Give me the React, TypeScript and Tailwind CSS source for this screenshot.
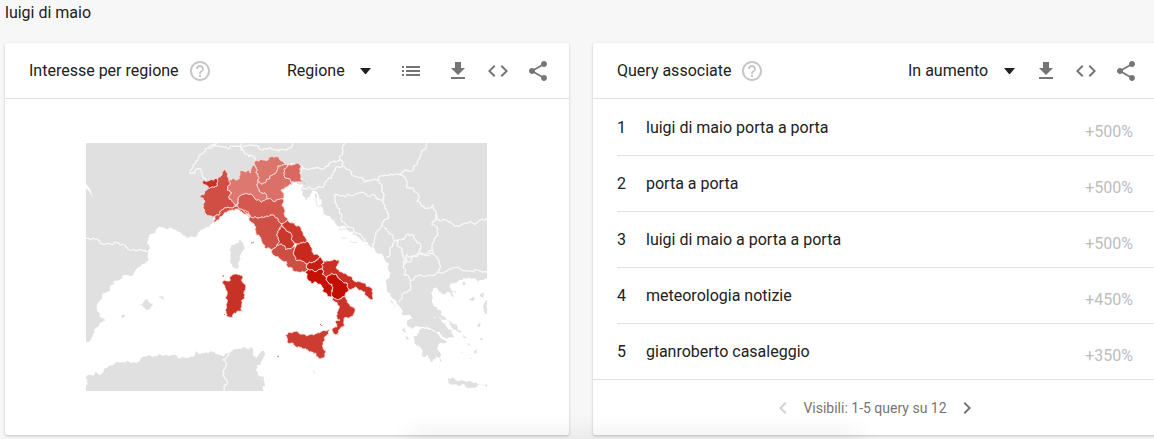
import type { ReactNode } from 'react';

type Query = {
  name: string;
  growth: string;
};

const QUERIES: Query[] = [
  { name: 'luigi di maio porta a porta', growth: '+500%' },
  { name: 'porta a porta', growth: '+500%' },
  { name: 'luigi di maio a porta a porta', growth: '+500%' },
  { name: 'meteorologia notizie', growth: '+450%' },
  { name: 'gianroberto casaleggio', growth: '+350%' },
];

const REGIONS = [
  { name: 'Piemonte', fill: '#d04e43', points: '217,181 222,175 224,169 226,171 227,176 229,180 227,190 232,193 229,198 236,205 233,208 228,207 222,210 219,215 215,216 210,216 205,213 203,208 205,201 203,198 200,196 205,191 208,188 217,186' },
  { name: "Valle d'Aosta", fill: '#c93126', points: '202,181 210,180 216,178 218,181 217,186 208,188 205,185' },
  { name: 'Liguria', fill: '#d04b40', points: '213,222 215,216 219,215 222,210 228,207 233,208 237,206 243,210 247,213 250,217 244,214 240,211 232,210 227,212 223,215 219,220' },
  { name: 'Lombardia', fill: '#dc7870', points: '238,168 240,171 245,172 248,170 250,173 251,165 256,167 256,173 258,181 258,188 262,193 268,199 255,199 240,196 238,202 236,205 229,198 232,193 227,190 229,180 233,178 237,180 240,175' },
  { name: 'Trentino-Alto Adige', fill: '#dc756c', points: '255,161 261,159 268,160 272,156 279,156 282,161 285,164 278,166 276,173 270,178 265,183 258,181 256,173 256,167' },
  { name: 'Veneto', fill: '#da7067', points: '278,166 285,164 288,166 284,173 285,178 291,182 292,185 287,187 281,190 284,195 283,199 268,199 262,193 258,188 258,181 265,183 270,178 276,173' },
  { name: 'Friuli-Venezia Giulia', fill: '#d96960', points: '285,164 288,165 302,166 300,170 301,175 301,180 305,185 298,182 291,182 285,178 284,173 288,166' },
  { name: 'Emilia-Romagna', fill: '#d4584e', points: '240,196 255,199 268,199 283,199 282,206 284,213 288,219 282,224 277,218 272,215 265,217 258,218 250,215 243,210 237,206 238,202' },
  { name: 'Toscana', fill: '#d05046', points: '243,210 250,215 258,218 265,217 272,215 277,218 282,224 279,230 277,235 277,245 272,250 266,249 262,242 256,235 254,224 250,217' },
  { name: 'Umbria', fill: '#cb372b', points: '282,226 284,228 290,232 291,239 295,244 293,247 286,250 277,245 277,235 279,230' },
  { name: 'Marche', fill: '#cc3a2e', points: '282,224 288,219 295,225 301,228 303,233 307,241 302,243 297,244 293,241 291,239 290,232 284,228' },
  { name: 'Lazio', fill: '#cf4e44', points: '272,250 277,245 286,250 293,247 297,244 295,248 294,255 297,261 307,264 308,269 305,272 295,272 288,268 280,259' },
  { name: 'Abruzzo', fill: '#c8291d', points: '307,241 312,248 320,257 315,262 307,264 297,261 294,255 295,248 297,244 302,243' },
  { name: 'Molise', fill: '#c41d12', points: '320,257 324,261 322,269 308,269 307,264 315,262' },
  { name: 'Campania', fill: '#c41103', points: '305,272 308,269 322,269 327,277 328,282 333,288 333,295 328,297 323,292 322,287 317,283 308,280' },
  { name: 'Puglia', fill: '#ca3024', points: '324,261 330,261 339,260 339,263 336,267 337,269 350,276 365,283 370,287 373,293 372,300 366,296 365,292 355,287 349,290 347,283 341,280 337,275 327,277 322,269' },
  { name: 'Basilicata', fill: '#c20e00', points: '327,277 337,275 341,280 347,283 349,290 346,297 340,299 333,297 333,288 328,282' },
  { name: 'Calabria', fill: '#cb3529', points: '333,297 340,299 346,297 347,302 353,307 354,315 350,317 344,321 344,326 340,329 338,335 333,334 332,331 337,327 335,322 340,320 338,310' },
  { name: 'Sicilia', fill: '#cc3c31', points: '285,335 289,332 292,333 297,331 303,334 317,333 322,331 330,329 327,335 323,343 323,347 326,352 323,358 318,357 312,352 303,349 293,343 287,342' },
  { name: 'Sardegna', fill: '#c83125', points: '223,281 230,281 237,274 242,275 242,279 246,287 244,292 245,298 243,312 238,311 234,313 233,317 229,317 226,313 227,302 225,297 227,292 223,284' },
];

const LAND = [
  // Europe, from Spain round to the Aegean
  '86,143 487,143 487,279 478,282 470,278 458,281 450,285 453,291 458,293 452,292 454,297 447,292 445,295 438,285 433,288 433,298 437,307 442,312 440,317 433,318 442,322 452,330 454,338 452,337 442,336 433,330 423,327 410,327 407,322 413,318 408,315 400,307 395,300 390,293 386,283 388,270 385,260 382,254 373,248 360,238 347,230 337,226 330,216 323,210 322,201 318,193 312,191 307,201 303,196 301,188 305,185 291,182 284,190 255,190 240,200 220,208 213,222 208,227 200,231 197,236 190,237 183,235 177,231 168,229 162,227 158,228 152,234 148,238 147,243 149,250 148,255 149,260 145,264 135,271 123,275 113,282 114,284 110,287 105,293 98,303 98,312 102,318 105,321 100,323 95,328 92,337 90,341 86,341',
  // North Africa
  '86,391 86,377 90,375 93,376 96,372 99,375 102,373 107,368 117,362 127,361 140,360 147,356 152,357 160,354 173,355 180,359 185,358 195,354 197,351 201,354 208,353 211,351 220,355 227,353 230,353 237,349 245,347 247,349 251,347 253,355 257,358 260,353 264,351 265,354 262,360 257,365 256,370 259,376 264,378 265,384 263,391',
  // Peloponnese and Crete
  '413,337 419,333 425,329 437,333 440,338 447,343 438,345 440,352 441,362 435,355 432,362 428,355 422,356 420,347',
  '448,378 457,381 467,382 480,384 487,383 487,387 470,388 465,385 448,383',
  // Euboea
  '437,313 445,317 457,325 462,332 458,332 450,325 441,319',
  // Corsica
  '229,249 232,245 239,243 240,239 242,242 242,252 240,260 239,267 237,269 232,265 230,256',
  // Balearics
  '137,304 147,299 148,302 153,303 151,307 148,310 143,307',
  '158,297 163,296 165,299 162,299',
  '121,317 125,314 125,317 122,318',
  // Aegean and Ionian islands
  '390,301 393,302 396,307 393,304',
  '402,329 405,327 406,332 403,331',
  '405,337 408,337 409,340 406,339',
  '462,283 465,282 465,285 463,285',
  '469,299 474,297 474,300 470,300',
  '480,294 484,292 481,297',
  '484,304 487,300 487,314 484,312',
  '474,351 477,349 477,353 475,354',
  '463,334 467,337 465,338',
  '477,325 480,322 480,327',
  '467,343 470,344 469,346',
  '461,350 463,352 461,353',
  '470,357 472,358 470,359',
  '480,338 483,339 481,340',
  '438,365 440,366 439,368',
  '312,371 316,373 314,374',
];

const BORDERS = [
  '86,238 90,240 95,239 100,243 112,245 115,242 120,245 125,245 130,250 137,251 143,251 149,250',
  '217,143 213,147 208,148 205,151 200,155 198,160 193,165 190,173 195,173 197,169 201,169 206,180',
  '208,147 217,146 228,149 236,146 242,148',
  '242,143 241,150 245,154 253,156 255,161',
  '242,148 255,146 262,150 270,147 279,151 287,150 293,143',
  '282,162 290,165 303,167 313,168 323,169 332,162 342,161 343,151 345,143',
  '302,188 310,187 316,189 323,187 327,180 333,173 342,166 342,161',
  '342,166 353,176 365,182 378,180 390,174 400,175 413,171 418,160 427,143',
  '400,175 407,181 407,188 417,193 417,201 428,208 433,205 436,215 440,221 453,224 465,223 475,225 487,218',
  '436,215 432,225 438,236 433,243 433,251',
  '378,180 382,190 383,200 367,196 348,194 334,195 335,203 342,216 353,228 362,236 373,248',
  '383,200 387,210 389,218 383,226 375,236 373,248',
  '384,228 391,234 398,240 390,248 387,258',
  '398,240 407,234 413,235 420,243 419,251 407,255 403,263',
  '398,240 397,245 402,249 403,257 403,267',
  '419,252 433,250',
  '403,267 405,262 411,261 420,254 433,252 439,262 438,272 430,275 423,276 410,280 404,275 403,267',
  '410,280 411,286 402,297 399,302',
  '438,272 447,271 458,267 465,271 478,270 487,272',
  '303,167 300,172 302,180',
  '229,353 227,357 223,360 226,366 224,373 227,384 224,391',
];

const DALMATIAN_ISLANDS = ['316,198 320,207', '325,208 328,213', '330,216 336,223', '339,229 350,232', '341,238 346,239', '350,241 357,242', '352,234 362,240'];

const ITALIAN_ISLETS = ['251,243 254,242', '320,324 322,326', '277,356 279,357', '223,277 224,275', '224,314 225,315'];

type Point = [number, number];

// Midpoint displacement, keyed on the two end points so that neighbours share an edge.
function roughen(a: Point, b: Point, depth: number): Point[] {
  const dx = b[0] - a[0];
  const dy = b[1] - a[1];
  const length = Math.hypot(dx, dy);
  if (depth === 0 || length < 2 || length > 30) return [b];
  const flip = a[0] < b[0] || (a[0] === b[0] && a[1] < b[1]) ? 1 : -1;
  const seed = Math.sin((a[0] + b[0]) * 12.99 + (a[1] + b[1]) * 78.23) * 43758.5;
  const shift = (seed - Math.floor(seed) - 0.5) * 0.55 * flip;
  const mid: Point = [(a[0] + b[0]) / 2 - dy * shift, (a[1] + b[1]) / 2 + dx * shift];
  return [...roughen(a, mid, depth - 1), ...roughen(mid, b, depth - 1)];
}

function toPath(points: string, closed = false) {
  const list = points.split(' ').map((p) => p.split(',').map(Number) as Point);
  if (closed) list.push(list[0]);
  const out: Point[] = [list[0]];
  for (let i = 1; i < list.length; i++) out.push(...roughen(list[i - 1], list[i], 3));
  return `M${out.map((p) => `${p[0].toFixed(1)} ${p[1].toFixed(1)}`).join('L')}${closed ? 'Z' : ''}`;
}

function ItalyMap() {
  return (
    <svg viewBox="86 143 401 248" className="block w-[401px] max-w-full" role="img" aria-label="Interesse per regione">
      <g fill="#e0e0e0">
        {LAND.map((points) => (
          <path key={points} d={toPath(points, true)} />
        ))}
      </g>
      <g fill="none" stroke="#fafafa" strokeWidth="1.2" strokeLinejoin="round">
        {BORDERS.map((points) => (
          <path key={points} d={toPath(points)} />
        ))}
      </g>
      <path d="M86 184l4 5 3 9-4-7-3-3z M312 192l4-1 3 5-1 6-3-4z" fill="#fff" />
      <path d="M315 193l2 2 0 4-2-3z" fill="#e0e0e0" />
      <g fill="none" stroke="#e3e3e3">
        {DALMATIAN_ISLANDS.map((points) => (
          <path key={points} d={toPath(points)} />
        ))}
      </g>
      <g stroke="#f6dbd9" strokeWidth="0.9" strokeLinejoin="round">
        {REGIONS.map((r) => (
          <path key={r.name} d={toPath(r.points, true)} fill={r.fill} />
        ))}
      </g>
      <g fill="none" stroke="#dc7068">
        {ITALIAN_ISLETS.map((points) => (
          <path key={points} d={toPath(points)} />
        ))}
      </g>
    </svg>
  );
}

function Icon({ d }: { d: string }) {
  return (
    <svg viewBox="0 0 24 24" fill="currentColor" className="size-6" aria-hidden>
      <path d={d} />
    </svg>
  );
}

const HELP = 'M11 18h2v-2h-2v2zm1-16C6.48 2 2 6.48 2 12s4.48 10 10 10 10-4.48 10-10S17.52 2 12 2zm0 18c-4.41 0-8-3.59-8-8s3.59-8 8-8 8 3.59 8 8-3.59 8-8 8zm0-14c-2.21 0-4 1.79-4 4h2c0-1.1.9-2 2-2s2 .9 2 2c0 2-3 1.75-3 5h2c0-2.25 3-2.5 3-5 0-2.21-1.79-4-4-4z';
const LIST = 'M3 7h2v2H3zM7 7h14v2H7zM3 11h2v2H3zM7 11h14v2H7zM3 15h2v2H3zM7 15h14v2H7z';
const DOWNLOAD = 'M19 9h-4V3H9v6H5l7 7 7-7zM5 18v2h14v-2H5z';
const CODE = 'M9.4 16.6L4.8 12l4.6-4.6L8 6l-6 6 6 6 1.4-1.4zm5.2 0l4.6-4.6-4.6-4.6L16 6l6 6-6 6-1.4-1.4z';
const SHARE = 'M18 16.08c-.76 0-1.44.3-1.96.77L8.91 12.7c.05-.23.09-.46.09-.7s-.04-.47-.09-.7l7.05-4.11c.54.5 1.25.81 2.04.81 1.66 0 3-1.34 3-3s-1.34-3-3-3-3 1.34-3 3c0 .24.04.47.09.7L8.04 9.81C7.5 9.31 6.79 9 6 9c-1.66 0-3 1.34-3 3s1.34 3 3 3c.79 0 1.5-.31 2.04-.81l7.12 4.16c-.05.21-.08.43-.08.65 0 1.61 1.31 2.92 2.92 2.92s2.92-1.31 2.92-2.92-1.31-2.92-2.92-2.92z';
const PREVIOUS = 'M15.41 7.41L14 6l-6 6 6 6 1.41-1.41L10.83 12z';
const NEXT = 'M10 6L8.59 7.41 13.17 12l-4.58 4.59L10 18l6-6z';

function IconButton({ label, d }: { label: string; d: string }) {
  return (
    <button type="button" aria-label={label} className="flex size-10 items-center justify-center text-[#757575]">
      <Icon d={d} />
    </button>
  );
}

function Picker({ label, options, className }: { label: string; options: string[]; className: string }) {
  return (
    <div className={`relative flex items-center ${className}`}>
      <select aria-label={label} className="w-full appearance-none bg-transparent leading-6 outline-none">
        {options.map((o) => (
          <option key={o}>{o}</option>
        ))}
      </select>
      <svg viewBox="0 0 10 6" className="pointer-events-none absolute right-0 w-[11px]" aria-hidden>
        <path d="M0 0h10L5 6z" fill="#212121" />
      </svg>
    </div>
  );
}

function Card({ title, actions, children }: { title: string; actions: ReactNode; children: ReactNode }) {
  return (
    <section className="flex flex-col rounded-xs bg-white shadow-[0_1px_3px_rgba(0,0,0,0.22)]">
      <header className="flex h-14 items-center border-b border-[#e0e0e0] pt-px pr-[11px] pl-6">
        <h2>{title}</h2>
        <button type="button" aria-label="Guida" className="ml-[9px] text-[#c7c7c7]">
          <Icon d={HELP} />
        </button>
        <div className="ml-auto flex items-center">{actions}</div>
      </header>
      {children}
    </section>
  );
}

export default function App() {
  return (
    <main className="relative min-h-screen overflow-hidden bg-[#f7f7f7] pb-1 pl-[5px] font-['Roboto',sans-serif] text-base text-[#212121]">
      <h1 className="pb-[18px] leading-[25px]">luigi di maio</h1>

      <div className="-mr-[3px] grid grid-cols-2 gap-6">
        <Card
          title="Interesse per regione"
          actions={
            <>
              <Picker label="Area" options={['Regione', 'Città']} className="mr-5 w-[84px]" />
              <div className="mr-[7px]">
                <IconButton label="Elenco" d={LIST} />
              </div>
              <IconButton label="Scarica" d={DOWNLOAD} />
              <IconButton label="Incorpora" d={CODE} />
              <IconButton label="Condividi" d={SHARE} />
            </>
          }
        >
          <div className="flex justify-center pt-11 pr-px">
            <ItalyMap />
          </div>
        </Card>

        <Card
          title="Query associate"
          actions={
            <>
              <Picker label="Ordina" options={['In aumento', 'Più cercate']} className="mr-[11px] w-[107px]" />
              <IconButton label="Scarica" d={DOWNLOAD} />
              <IconButton label="Incorpora" d={CODE} />
              <IconButton label="Condividi" d={SHARE} />
            </>
          }
        >
          <ol className="divide-y divide-[#e0e0e0] pt-px pl-6">
            {QUERIES.map((q, i) => (
              <li key={q.name} className="flex h-14 items-center pr-6 last:h-[55px]">
                <span className="w-[29px]">{i + 1}</span>
                <a href="#" className="flex-1">
                  {q.name}
                </a>
                <span className="pt-2 text-[#bdbdbd]">{q.growth}</span>
              </li>
            ))}
          </ol>
          <footer className="flex h-14 items-center justify-center gap-2 border-t border-[#e0e0e0] text-sm text-[#757575]">
            <button type="button" aria-label="Precedente" disabled className="text-[#d0d0d0]">
              <Icon d={PREVIOUS} />
            </button>
            <span>Visibili: 1-5 query su 12</span>
            <button type="button" aria-label="Successiva">
              <Icon d={NEXT} />
            </button>
          </footer>
        </Card>
      </div>

      <div className="pointer-events-none absolute top-full right-[26%] left-[36%] h-10 shadow-[0_0_24px_6px_rgba(0,0,0,0.07)]" />
    </main>
  );
}
